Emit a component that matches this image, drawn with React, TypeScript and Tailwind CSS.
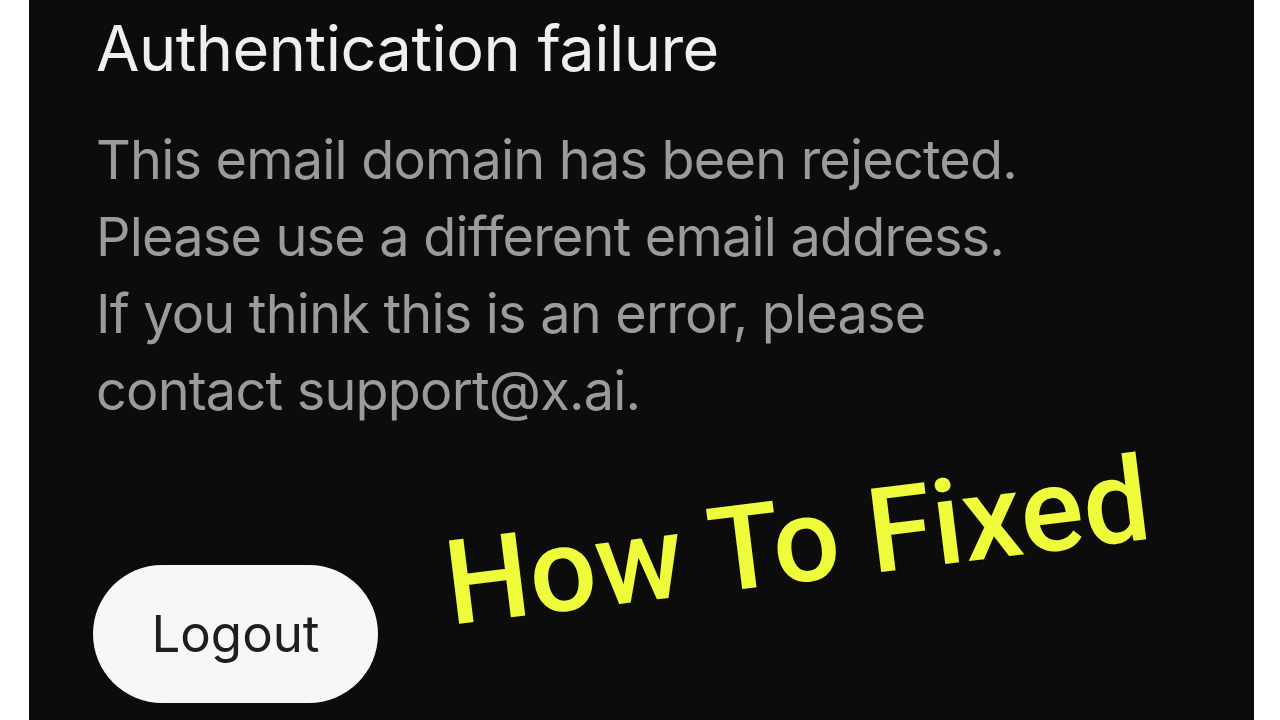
export default function App() {
  return (
    <div className="w-[1280px] h-[720px] bg-white flex overflow-hidden">
      <div className="relative ml-[29px] w-[1225px] h-full bg-[#0c0c0c] pl-[67px] pt-[12px] font-['Inter',sans-serif]">
        <h1 className="text-[63px] leading-[72px] text-[#efefef] tracking-[-0.5px]">
          Authentication failure
        </h1>
        <div className="mt-[37px] text-[54px] leading-[77px] text-[#9b9b9b] tracking-[-0.8px]">
          <p>This email domain has been rejected.</p>
          <p>Please use a different email address.</p>
          <p>If you think this is an error, please</p>
          <p>contact support@x.ai.</p>
        </div>
        <button className="mt-[136px] -ml-[3px] w-[285px] h-[138px] rounded-full bg-[#f7f7f7] text-[51px] text-[#1e1e1e] flex items-center justify-center">
          Logout
        </button>
        <div className="absolute left-[417px] top-[526px] -rotate-[7deg] origin-left text-[118px] leading-none font-medium text-[#eefc3c] font-['Roboto',sans-serif] whitespace-nowrap">
          How To Fixed
        </div>
      </div>
    </div>
  );
}
